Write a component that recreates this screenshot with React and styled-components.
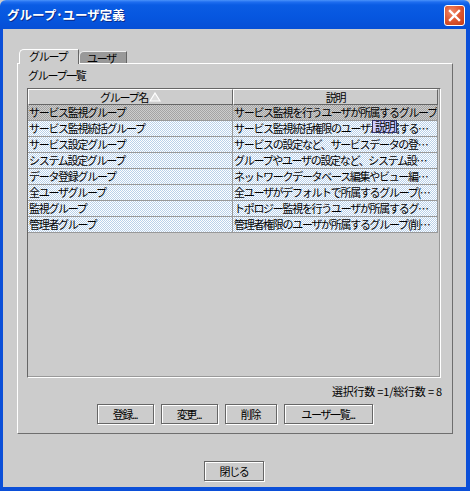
import styled, { createGlobalStyle } from 'styled-components';

const Global = createGlobalStyle`
  html, body {
    margin: 0;
    padding: 0;
    background: #cccccc;
  }
  body {
    font-family: "Noto Sans CJK JP", "DejaVu Sans", sans-serif;
    font-size: 11px;
    letter-spacing: -1.3px;
    color: #000;
  }
  * { box-sizing: border-box; }
`;

const Window = styled.div`
  width: 470px;
  height: 491px;
  display: flex;
  flex-direction: column;
`;

const TitleBar = styled.div`
  height: 29px;
  flex: none;
  display: flex;
  align-items: center;
  justify-content: space-between;
  padding: 0 5px 0 7px;
  background: linear-gradient(#4a93fa 0, #1f6ef0 2px, #0a5ce4 5px, #0656df 60%, #064fd6 100%);
  border-radius: 6px 6px 0 0;
`;

const Title = styled.div`
  color: #fff;
  font-weight: bold;
  font-size: 12.5px;
  letter-spacing: 0;
  text-shadow: 1px 1px 0 #0a2c8c;
`;

const CloseButton = styled.div`
  width: 21px;
  height: 21px;
  margin-top: 2px;
  border: 1px solid #fff;
  border-radius: 3px;
  background: radial-gradient(circle at 35% 30%, #f08a6a 0, #e05a34 45%, #c33a14 100%);
  display: flex;
  align-items: center;
  justify-content: center;
`;

const Frame = styled.div`
  flex: 1;
  display: flex;
  flex-direction: column;
  background: #cccccc;
  border-style: solid;
  border-color: #0b4fd8;
  border-width: 0 4px 4px 3px;
  padding: 21px 13px 0 14px;
`;

const TabStrip = styled.div`
  display: flex;
  align-items: flex-end;
  height: 14px;
  padding-left: 2px;
  position: relative;
  z-index: 1;
  margin-bottom: -1px;
`;

const Tab = styled.div`
  height: ${p => (p.$active ? '15px' : '12px')};
  width: ${p => p.$w}px;
  padding-left: ${p => (p.$active ? 9 : 7)}px;
  line-height: 12px;
  background: ${p => (p.$active ? '#cccccc' : '#999999')};
  border-top: 1px solid ${p => (p.$active ? '#ffffff' : '#eeeeee')};
  border-left: 1px solid ${p => (p.$active ? '#ffffff' : '#eeeeee')};
  border-right: 1px solid #666666;
  border-top-left-radius: 5px;
  margin-bottom: ${p => (p.$active ? 0 : 1)}px;
`;

const Panel = styled.div`
  height: 371px;
  display: flex;
  flex-direction: column;
  border-top: 1px solid #ffffff;
  border-left: 1px solid #ffffff;
  border-right: 1px solid #6e6e6e;
  border-bottom: 1px solid #6e6e6e;
  padding: 0 10px 0 9px;
`;

const PanelLabel = styled.div`
  height: 24px;
  line-height: 22px;
  padding-left: 1px;
`;

const TableBox = styled.div`
  position: relative;
  width: 414px;
  height: 290px;
  border-top: 1px solid #666666;
  border-left: 1px solid #666666;
  border-right: 1px solid #ffffff;
  border-bottom: 1px solid #ffffff;
  box-shadow: inset -1px -1px 0 #999999;
`;

const Grid = styled.div`
  display: grid;
  grid-template-columns: 205px 205px;
`;

const HeaderCell = styled.div`
  height: 16px;
  line-height: 14px;
  background: #cccccc;
  border-top: 1px solid #ffffff;
  border-left: 1px solid #ffffff;
  border-right: 1px solid #666666;
  border-bottom: 1px solid #666666;
  display: flex;
  align-items: center;
  justify-content: center;
  gap: 1px;
`;

const Cell = styled.div`
  height: 16px;
  line-height: 15px;
  padding-left: 1px;
  white-space: nowrap;
  overflow: hidden;
  text-overflow: ellipsis;
  border-bottom: 1px solid #999999;
  border-right: 1px solid #999999;
  background: ${p =>
    p.$selected
      ? 'repeating-conic-gradient(#a4a4a4 0 25%, #cdcdcd 0 50%) 0 0 / 2px 2px'
      : 'repeating-conic-gradient(#b9d1ea 0 25%, #ffffff 0 50%) 0 0 / 2px 2px'};
`;

const Tooltip = styled.div`
  position: absolute;
  left: 344px;
  top: 31px;
  height: 13px;
  padding: 0 2px;
  line-height: 11px;
  background: #ccccff;
  border: 1px solid #333366;
`;

const Status = styled.div`
  margin-top: 6px;
  height: 14px;
  line-height: 14px;
  text-align: right;
  letter-spacing: -0.2px;
`;

const ButtonRow = styled.div`
  margin-top: 6px;
  display: flex;
  justify-content: center;
  gap: 7px;
`;

const Button = styled.div`
  width: ${p => p.$w}px;
  height: 20px;
  line-height: 18px;
  text-align: center;
  background: #cccccc;
  border: 1px solid #666666;
  box-shadow: 1px 1px 0 #ffffff, inset 1px 1px 0 #ffffff;
`;

const Footer = styled.div`
  margin-top: 27px;
  display: flex;
  justify-content: center;
  padding-right: 2px;
`;

const rows = [
  ['サービス監視グループ', 'サービス監視を行うユーザが所属するグループ'],
  ['サービス監視統括グループ', 'サービス監視統括権限のユーザが所属するグループ'],
  ['サービス設定グループ', 'サービスの設定など、サービスデータの登録を行う'],
  ['システム設定グループ', 'グループやユーザの設定など、システム設定を行う'],
  ['データ登録グループ', 'ネットワークデータベース編集やビュー編集などを行う'],
  ['全ユーザグループ', '全ユーザがデフォルトで所属するグループ(削除不可)'],
  ['監視グループ', 'トポロジー監視を行うユーザが所属するグループ'],
  ['管理者グループ', '管理者権限のユーザが所属するグループ(削除不可)'],
];

const SortIcon = () => (
  <svg width="12" height="10" viewBox="0 0 12 10">
    <polygon points="6,1 11,9 1,9" fill="#dddddd" stroke="#ffffff" strokeWidth="1.2" />
  </svg>
);

const App = () => {
  return (
    <Window>
      <Global />
      <TitleBar>
        <Title>グループ･ユーザ定義</Title>
        <CloseButton>
          <svg width="13" height="13" viewBox="0 0 13 13">
            <path d="M2 2 L11 11 M11 2 L2 11" stroke="#fff" strokeWidth="2.4" strokeLinecap="square" />
          </svg>
        </CloseButton>
      </TitleBar>
      <Frame>
        <TabStrip>
          <Tab $active $w={60}>グループ</Tab>
          <Tab $w={48}>ユーザ</Tab>
        </TabStrip>
        <Panel>
          <PanelLabel>グループ一覧</PanelLabel>
          <TableBox>
            <Grid>
              <HeaderCell>グループ名<SortIcon /></HeaderCell>
              <HeaderCell>説明</HeaderCell>
              {rows.map((r, i) => [
                <Cell key={i + 'a'} $selected={i === 0}>{r[0]}</Cell>,
                <Cell key={i + 'b'} $selected={i === 0}>{r[1]}</Cell>,
              ])}
            </Grid>
            <Tooltip>説明</Tooltip>
          </TableBox>
          <Status>選択行数 =1/総行数 = 8</Status>
          <ButtonRow>
            <Button $w={57}>登録...</Button>
            <Button $w={57}>変更...</Button>
            <Button $w={52}>削除</Button>
            <Button $w={89}>ユーザ一覧...</Button>
          </ButtonRow>
        </Panel>
        <Footer>
          <Button $w={60}>閉じる</Button>
        </Footer>
      </Frame>
    </Window>
  );
};

export default App;
